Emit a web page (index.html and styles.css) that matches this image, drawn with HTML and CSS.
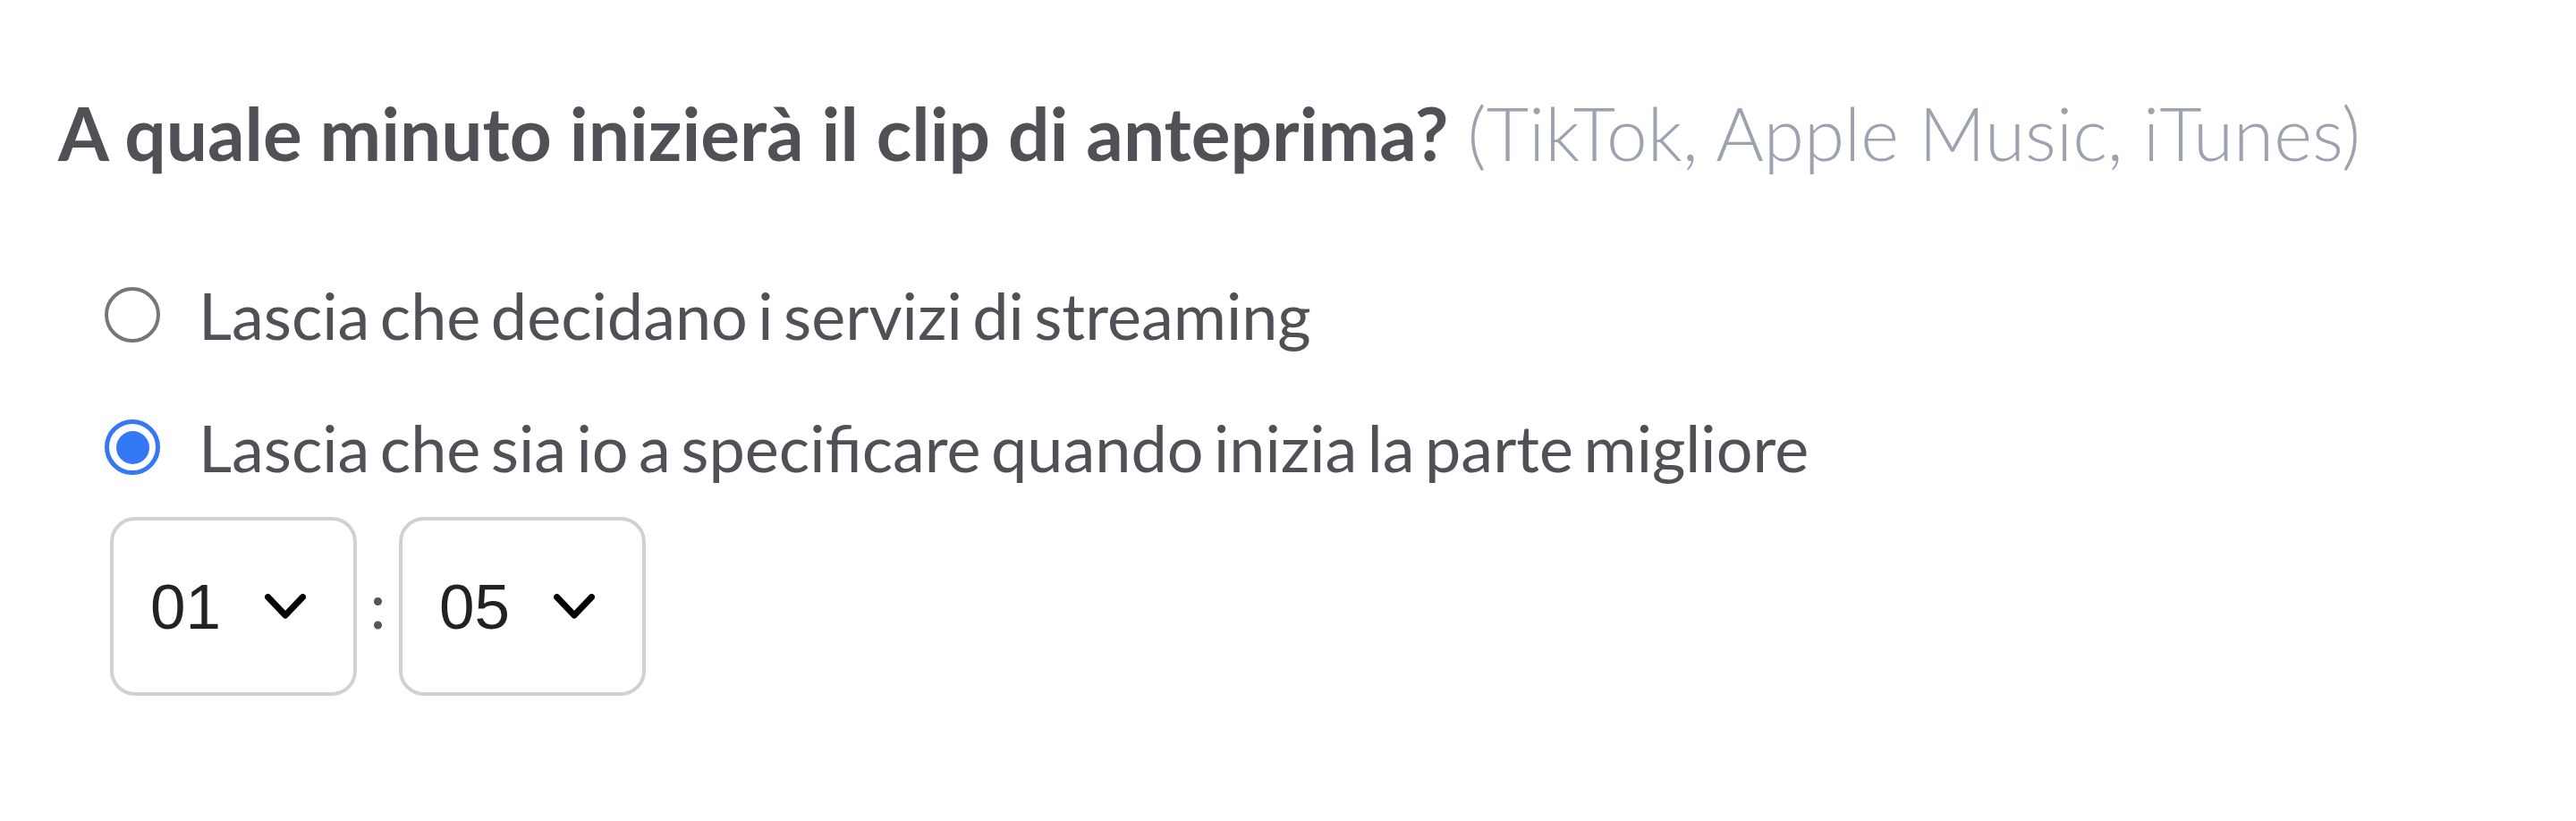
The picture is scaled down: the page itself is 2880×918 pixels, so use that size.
FILE: index.html
```html
<!DOCTYPE html>
<html lang="it">
<head>
<meta charset="utf-8">
<title>Clip di anteprima</title>
<link rel="stylesheet" href="styles.css">
</head>
<body>
<main class="page">
  <h2 class="question"><span class="strong">A quale minuto inizierà il clip di anteprima?</span> <span class="hint">(TikTok, Apple Music, iTunes)</span></h2>
  <div class="options">
    <label class="option"><span class="radio"></span><span class="label">Lascia che decidano i servizi di streaming</span></label>
    <label class="option"><span class="radio checked"></span><span class="label">Lascia che sia io a specificare quando inizia la parte migliore</span></label>
  </div>
  <div class="time">
    <div class="select"><span class="value">01</span><svg class="chev" width="46" height="28" viewBox="0 0 46 28"><path d="M3.5 3.5 L23 24 L42.5 3.5" fill="none" stroke="#000" stroke-width="7" stroke-linecap="round" stroke-linejoin="round"/></svg></div>
    <span class="colon">:</span>
    <div class="select"><span class="value">05</span><svg class="chev" width="46" height="28" viewBox="0 0 46 28"><path d="M3.5 3.5 L23 24 L42.5 3.5" fill="none" stroke="#000" stroke-width="7" stroke-linecap="round" stroke-linejoin="round"/></svg></div>
  </div>
</main>
</body>
</html>
```
FILE: styles.css
```css
html, body {
  margin: 0;
  padding: 0;
  background: #ffffff;
}
.page {
  padding: 98px 0 0 65px;
  font-family: Lato, "Noto Sans", sans-serif;
  color: #505157;
}
.question {
  margin: 0;
  font-size: 82px;
  line-height: 100px;
  font-weight: 400;
  white-space: nowrap;
}
.strong {
  font-weight: 700;
}
.hint {
  font-weight: 300;
  color: #9ca3af;
}
.options {
  margin-top: 111px;
  padding-left: 52px;
  display: flex;
  flex-direction: column;
  gap: 62px;
}
.option {
  display: flex;
  align-items: center;
  gap: 43px;
  font-size: 72px;
  line-height: 86px;
  white-space: nowrap;
}
.label {
  word-spacing: -7px;
}
.radio {
  box-sizing: border-box;
  width: 62px;
  height: 62px;
  border-radius: 50%;
  border: 4px solid #767676;
  flex: none;
  display: flex;
  align-items: center;
  justify-content: center;
}
.radio.checked {
  border: 5px solid #3478f6;
}
.radio.checked::after {
  content: "";
  width: 37px;
  height: 37px;
  border-radius: 50%;
  background: #3478f6;
}
.time {
  margin-top: 35px;
  padding-left: 58px;
  display: flex;
  align-items: center;
}
.select {
  box-sizing: border-box;
  width: 276px;
  height: 200px;
  border: 4px solid #d1d1d1;
  border-radius: 28px;
  display: flex;
  align-items: center;
  padding-left: 41px;
  font-family: "Liberation Sans", Arial, sans-serif;
  font-size: 71px;
  color: #222222;
}
.value {
  line-height: 1;
}
.chev {
  margin-left: 49px;
  display: block;
}
.colon {
  font-size: 72px;
  line-height: 1;
  color: #55565b;
  width: 47px;
  text-align: center;
  margin-top: -6px;
}
```
